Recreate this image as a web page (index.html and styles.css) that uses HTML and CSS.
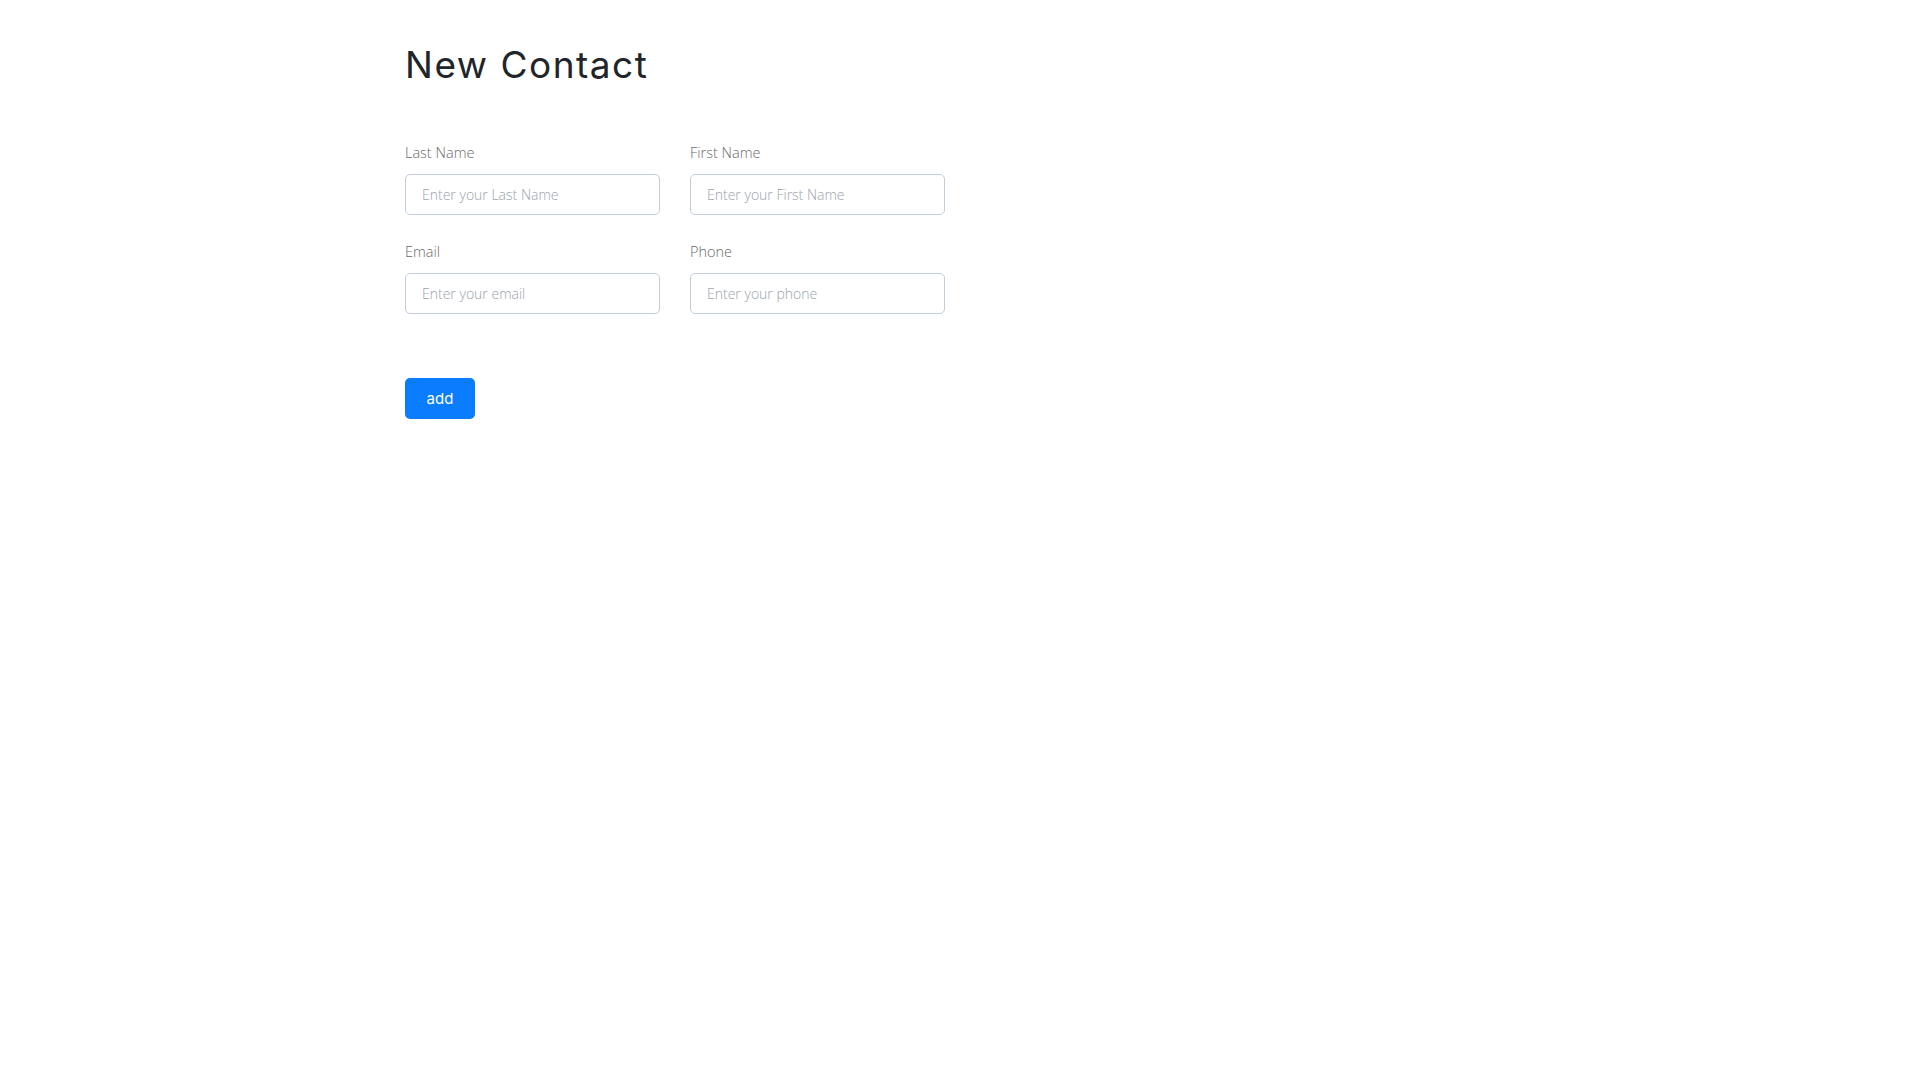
FILE: index.html
```html
<!DOCTYPE html>
<html lang="en">
<head>
<meta charset="utf-8">
<title>New Contact</title>
<link rel="stylesheet" href="styles.css">
</head>
<body>
<div class="container">
  <div class="col-half">
    <h1 class="title">New Contact</h1>
    <form class="contact-form">
      <div class="grid">
        <div class="field">
          <label class="label" for="last">Last Name</label>
          <input class="input" id="last" type="text" placeholder="Enter your Last Name">
        </div>
        <div class="field">
          <label class="label" for="first">First Name</label>
          <input class="input" id="first" type="text" placeholder="Enter your First Name">
        </div>
        <div class="field">
          <label class="label" for="email">Email</label>
          <input class="input" id="email" type="text" placeholder="Enter your email">
        </div>
        <div class="field">
          <label class="label" for="phone">Phone</label>
          <input class="input" id="phone" type="text" placeholder="Enter your phone">
        </div>
      </div>
      <button class="btn" type="button">add</button>
    </form>
  </div>
</div>
</body>
</html>
```
FILE: styles.css
```css
html, body {
  margin: 0;
  padding: 0;
  background: #ffffff;
}
body {
  font-family: "Open Sans", "Liberation Sans", sans-serif;
  color: #212529;
}
.container {
  width: 1140px;
  margin: 0 auto;
  padding: 0 15px;
  box-sizing: border-box;
}
.col-half {
  width: 540px;
}
.title {
  font-family: "Inter", "Lato", sans-serif;
  font-weight: 400;
  font-size: 37px;
  line-height: 46px;
  letter-spacing: 1.5px;
  color: #212529;
  margin: 0;
  padding-top: 42px;
}
.contact-form {
  margin-top: 55px;
}
.grid {
  display: grid;
  grid-template-columns: 255px 255px;
  column-gap: 30px;
  row-gap: 27px;
}
.field {
  display: flex;
  flex-direction: column;
}
.label {
  font-size: 14.5px;
  line-height: 20px;
  color: #6a6a6a;
  font-weight: 300;
  margin-bottom: 11px;
}
.input {
  height: 41px;
  box-sizing: border-box;
  border: 1px solid #c3cedb;
  border-radius: 5px;
  padding: 0 16px;
  font-family: "Open Sans", "Liberation Sans", sans-serif;
  font-weight: 300;
  font-size: 14px;
  color: #495057;
  outline: none;
}
.input::placeholder {
  color: #9aa3ad;
}
.btn {
  margin-top: 64px;
  width: 70px;
  height: 41px;
  background: #0a7cff;
  color: #ffffff;
  border: none;
  border-radius: 5px;
  font-family: "Inter", "Lato", sans-serif;
  font-size: 15px;
  font-weight: 400;
  padding: 0;
  cursor: pointer;
}
```
